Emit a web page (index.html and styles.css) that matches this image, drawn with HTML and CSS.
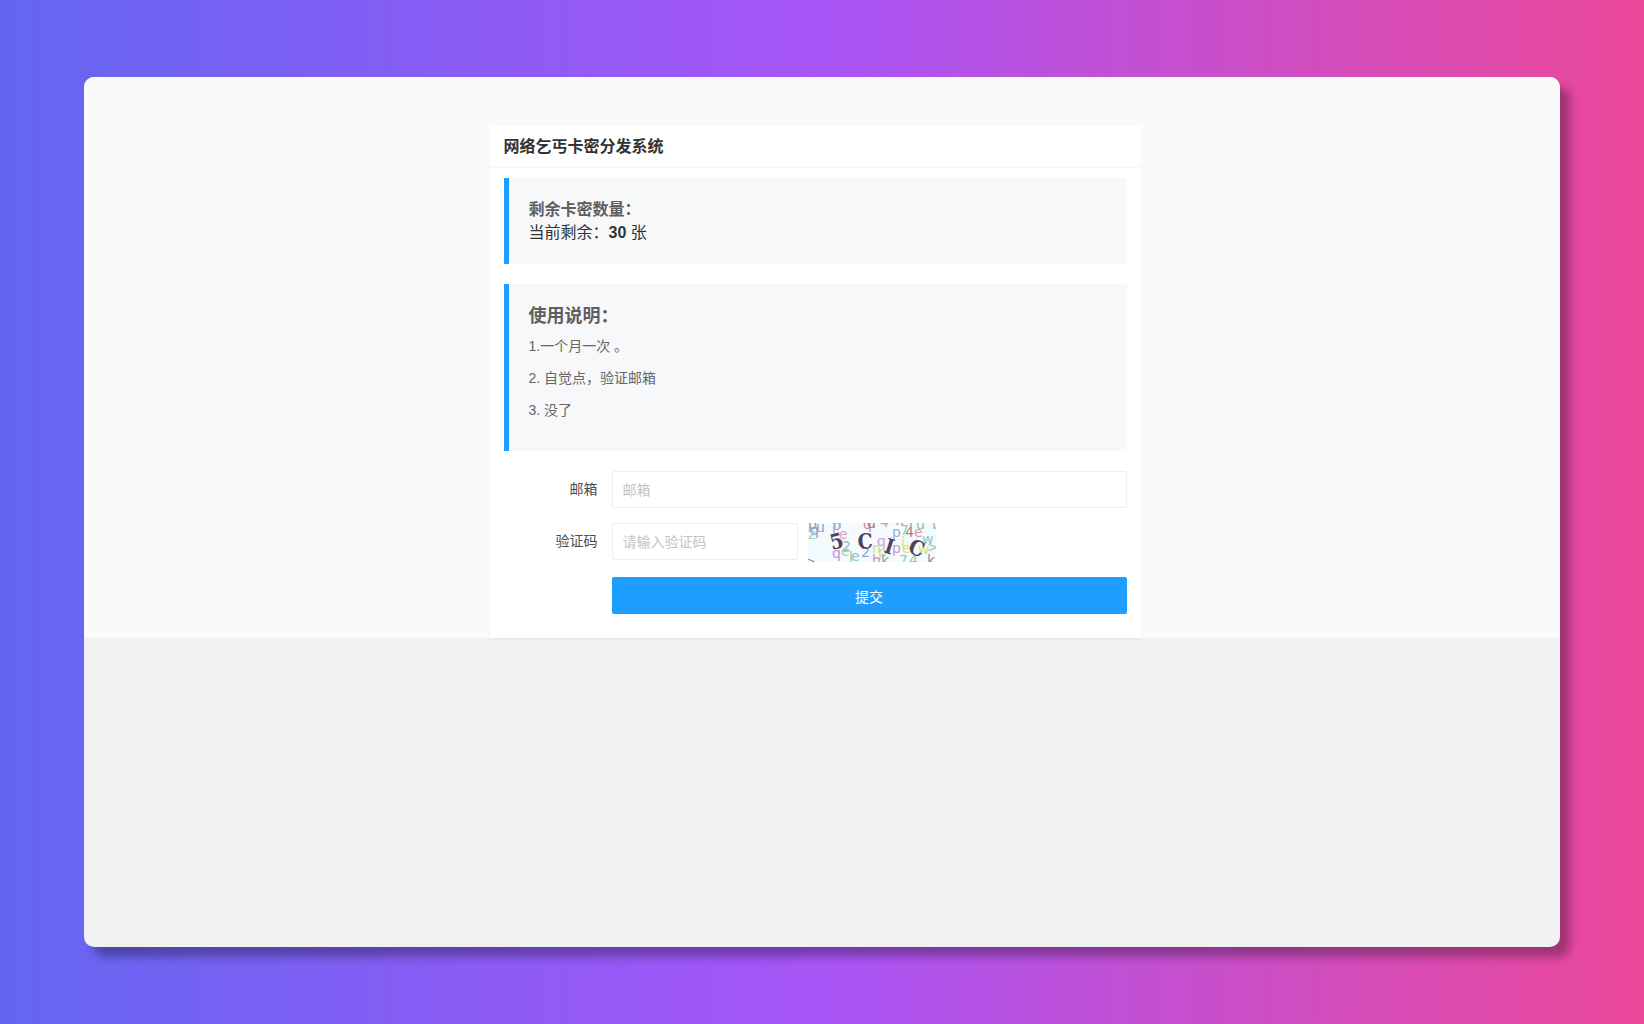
FILE: index.html
```
<!DOCTYPE html>
<html lang="zh-CN">
<head>
    <meta charset="UTF-8">
    <meta name="viewport" content="width=device-width, initial-scale=1.0">
    <title>网络乞丐卡密分发系统</title>
    <link rel="stylesheet" href="styles.css">
</head>
<body>

    <div class="window">
        <main class="page">
            <div class="card">
                <h1 class="card-header">网络乞丐卡密分发系统</h1>
                <div class="card-body">

                    <!-- 剩余数量 -->
                    <div class="quote">
                        <h2 class="stock-title">剩余卡密数量：</h2>
                        <p class="stock">当前剩余：<strong>30</strong> 张</p>
                    </div>

                    <!-- 使用说明 -->
                    <div class="quote">
                        <h2 class="help-title">使用说明：</h2>
                        <p class="help">1.一个月一次 。</p>
                        <p class="help">2. 自觉点，验证邮箱</p>
                        <p class="help">3. 没了</p>
                    </div>

                    <form>
                        <div class="form-item">
                            <label for="email">邮箱</label>
                            <input type="text" id="email" name="email" placeholder="邮箱">
                        </div>
                        <div class="form-item">
                            <label for="captcha">验证码</label>
                            <div class="captcha-row">
                                <input type="text" id="captcha" name="captcha" placeholder="请输入验证码">
                                <svg class="captcha" viewBox="0 0 128 39" role="img" aria-label="验证码">
                                    <rect width="128" height="39" fill="#f3fbfe"/>
                                    <g class="noise">
                                        <text x="0" y="6" fill="#a58aa5">p</text>
                                        <text x="2" y="12" fill="#8c9cc0">q</text>
                                        <text x="8" y="9" fill="#8fa5bd">u</text>
                                        <text x="0" y="16" fill="#9fd8ab">z</text>
                                        <text x="24" y="7" fill="#a99bd0">p</text>
                                        <text x="25" y="5" fill="#8fbfc0">h</text>
                                        <text x="31" y="16" fill="#dba6b4">e</text>
                                        <text x="34" y="28" fill="#9cb5c5">2</text>
                                        <text x="24" y="35" fill="#c78fd8">q</text>
                                        <text x="33" y="33" fill="#a5d6a8">e</text>
                                        <text x="41" y="39" fill="#8ccfb0">l</text>
                                        <text x="43" y="38" fill="#8dc3bb">e</text>
                                        <text x="53" y="34" fill="#93a6c6">2</text>
                                        <text x="55" y="6" fill="#c98aa5">q</text>
                                        <text x="59" y="5" fill="#b9696c">d</text>
                                        <text x="72" y="4" fill="#c9a3ad">4</text>
                                        <text x="86" y="2" fill="#d3a3bd">w</text>
                                        <text x="69" y="23" fill="#d39be4">q</text>
                                        <text x="64" y="30" fill="#cddb8a">n</text>
                                        <text x="70" y="34" fill="#d8dd92">p</text>
                                        <text x="64" y="42" fill="#cf93a9">h</text>
                                        <text x="73" y="42" fill="#93a5ab">k</text>
                                        <text x="84" y="14" fill="#9cb1d5">p</text>
                                        <text x="92" y="12" fill="#8fd6a8">7</text>
                                        <text x="97" y="14" fill="#a8818b">4</text>
                                        <text x="106" y="14" fill="#d99aaa">e</text>
                                        <text x="84" y="30" fill="#cf95d3">p</text>
                                        <text x="93" y="24" fill="#d6de84">i</text>
                                        <text x="94" y="30" fill="#d4dc8e">e</text>
                                        <text x="101" y="4" fill="#7ca0b5">r</text>
                                        <text x="108" y="6" fill="#8fb8b3">u</text>
                                        <text x="124" y="6" fill="#9fb1d3">b</text>
                                        <text x="114" y="21" fill="#8cc9c1">w</text>
                                        <text x="110" y="31" fill="#d3df86">w</text>
                                        <text x="119" y="29" fill="#9cc0cb">&gt;</text>
                                        <text x="91" y="42" fill="#8fd3a5">7</text>
                                        <text x="101" y="42" fill="#8bcfae">4</text>
                                        <text x="119" y="42" fill="#8f9295">k</text>
                                        <text x="-4" y="43" fill="#7fa3a8">&gt;</text>
                                    </g>
                                    <g class="code">
                                        <text transform="translate(24 27) rotate(-14)">5</text>
                                        <text transform="translate(50 26) rotate(-3)">C</text>
                                        <text transform="translate(75 29) rotate(18)">I</text>
                                        <text transform="translate(99 29) rotate(22)">C</text>
                                    </g>
                                </svg>
                            </div>
                        </div>
                        <div class="form-item">
                            <button type="submit" class="submit-btn">提交</button>
                        </div>
                    </form>

                </div>
            </div>
        </main>
    </div>

</body>
</html>
```
FILE: styles.css
```
* {
    box-sizing: border-box;
}

body {
    display: flex;
    min-height: 100vh;
    margin: 0;
    padding: 77px 84px;
    font-family: "Liberation Sans", "Noto Sans CJK SC", sans-serif;
    font-size: 14px;
    color: #333;
    background: linear-gradient(to right, #6366f1, #a855f7, #ec4899);
}

.window {
    flex: 1;
    overflow: hidden;
    border-radius: 10px;
    background-color: #f1f1f1;
    box-shadow: 10px 10px 10px rgba(0, 0, 0, 0.3);
}

.page {
    padding: 49px 14px 0 0;
    background-color: #fafafa;
}

.card {
    max-width: 651px;
    margin: 0 auto;
    background-color: #fff;
    box-shadow: 0 1px 2px rgba(0, 0, 0, 0.05);
}

h1, h2, p {
    margin: 0;
}

.card-header {
    padding: 0 14px;
    border-bottom: 1px solid #f6f6f6;
    font-size: 16px;
    line-height: 41px;
}

.card-body {
    padding: 10px 14px 24px;
}

.quote {
    margin-bottom: 20px;
    padding: 20px;
    border-left: 5px solid #1e9fff;
    background-color: #f7f8fa;
}

.stock-title {
    font-size: 16px;
    line-height: 23px;
    color: #5f5f5f;
}

.stock {
    font-size: 16px;
    line-height: 23px;
}

.help-title {
    margin-bottom: 7px;
    font-size: 18px;
    line-height: 24px;
    color: #5f5f5f;
}

.help {
    margin-bottom: 10px;
    line-height: 22px;
    color: #666;
}

.form-item {
    display: flex;
    margin-bottom: 15px;
}

.form-item:last-child {
    margin-bottom: 0;
    padding-left: 108px;
}

label {
    width: 108px;
    padding-right: 14px;
    line-height: 36px;
    text-align: right;
    color: #4c4c4c;
}

input {
    flex: 1;
    min-width: 0;
    height: 37px;
    padding: 0 10px;
    border: 1px solid #eee;
    border-radius: 2px;
    font: inherit;
}

input::placeholder {
    color: #c4c4c4;
}

.captcha-row {
    display: flex;
    flex: 1;
    gap: 10px;
}

.captcha-row input {
    flex: 0 1 186px;
}

.captcha {
    width: 128px;
    height: 39px;
}

.noise {
    font-family: "DejaVu Sans", sans-serif;
    font-size: 14px;
}

.code {
    font-family: "DejaVu Serif Condensed", "DejaVu Serif", serif;
    font-size: 21px;
    font-weight: bold;
    fill: #54405c;
}

.submit-btn {
    flex: 1;
    height: 37px;
    border: none;
    border-radius: 2px;
    font: inherit;
    color: #fff;
    background-color: #1e9fff;
    cursor: pointer;
}
```
